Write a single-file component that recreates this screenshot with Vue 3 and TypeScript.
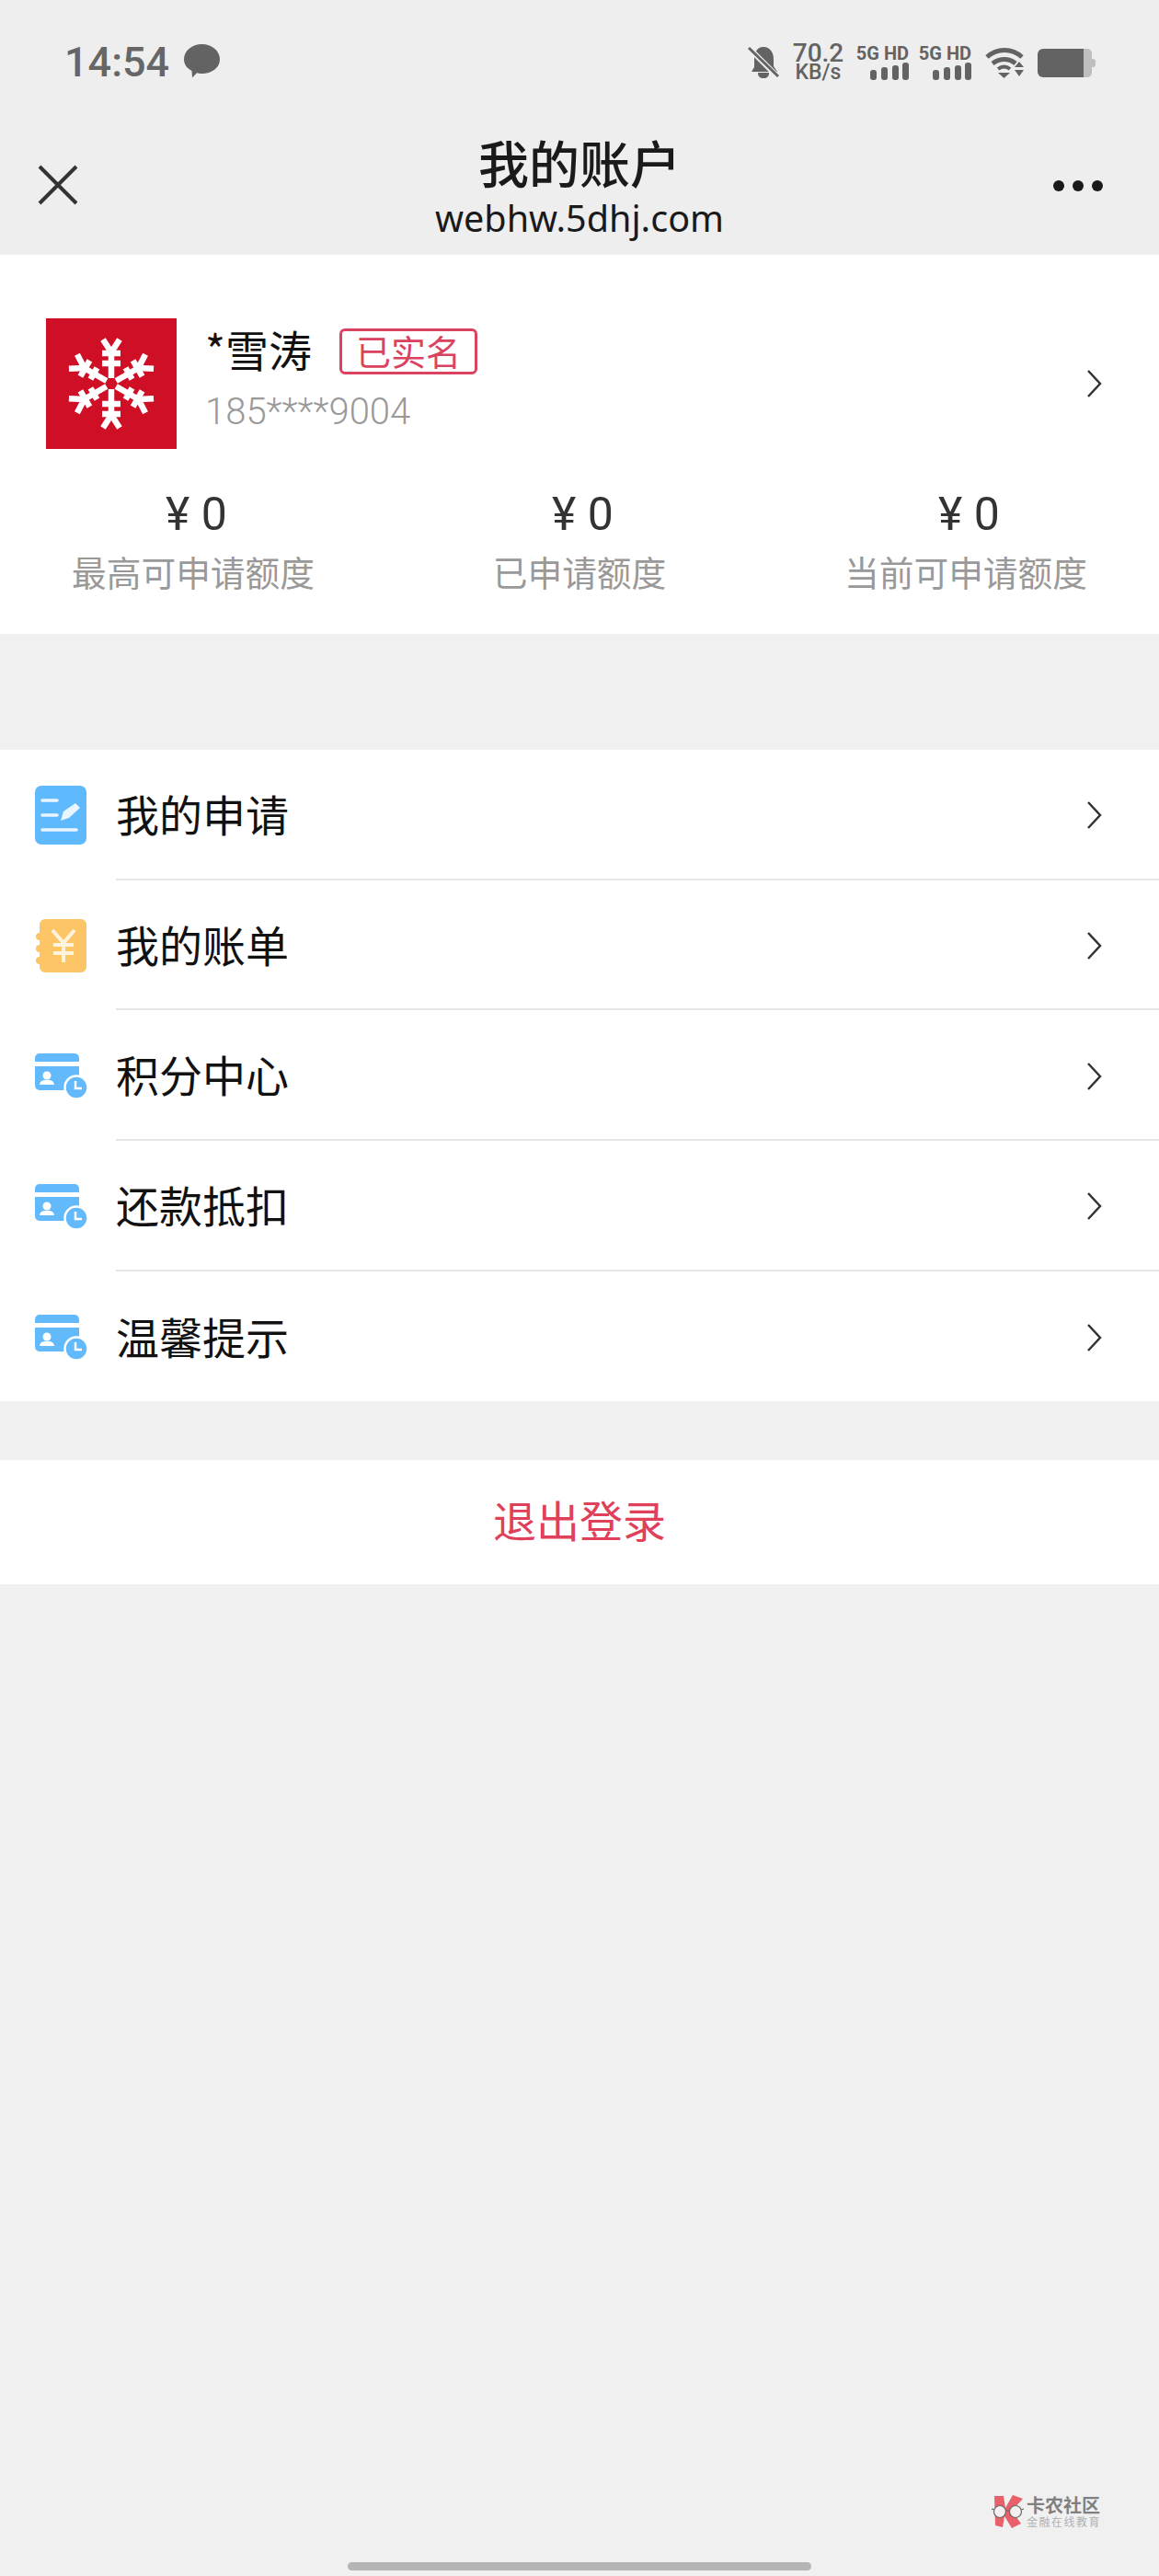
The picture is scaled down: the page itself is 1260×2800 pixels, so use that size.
<script setup lang="ts">
const stats = [
  { value: '0', label: '最高可申请额度' },
  { value: '0', label: '已申请额度' },
  { value: '0', label: '当前可申请额度' },
]
const menu = [
  { label: '我的申请', icon: 'apply' },
  { label: '我的账单', icon: 'bill' },
  { label: '积分中心', icon: 'card' },
  { label: '还款抵扣', icon: 'card' },
  { label: '温馨提示', icon: 'card' },
]
const arms = [0, 60, 120, 180, 240, 300]
const half = (a: number) => (a % 180 === 0 ? 10 : 7)
</script>

<template>
  <div class="page">
    <header class="top">
      <div class="status">
        <div class="status-left">
          <span class="time">14:54</span>
          <svg class="bubble" viewBox="0 0 39 38" width="39" height="38">
            <path d="M19.5 0C30 0 39 7 39 16.500S30 32 19.500 32c-2 0-4-.2-5.500-.7L9 36.500 8.500 29C3 26 0 22 0 16.500 0 7 9 0 19.500 0Z" fill="#636363" />
          </svg>
        </div>
        <div class="status-right">
          <svg class="bell" viewBox="0 0 34 36" width="34" height="36">
            <path d="M17 1c7 0 11 6 11 13v8l4 6H4l3-5V14C7 7 10 1 17 1Z" fill="#636363" />
            <path d="M11 29h12c0 4-2 6-6 6s-6-2-6-6Z" fill="#636363" />
            <path d="M2 3 33 34" stroke="#eeeeee" stroke-width="6" />
            <path d="M1 2 33 33" stroke="#636363" stroke-width="3" />
          </svg>
          <div class="speed">
            <span class="speed-num">70.2</span>
            <span class="speed-unit">KB/s</span>
          </div>
          <div class="sim" v-for="s in 2" :key="s">
            <span class="sim-label">5G HD</span>
            <svg class="sim-bars" viewBox="0 0 42 20" width="42" height="20">
              <rect x="0" y="8" width="7" height="11" rx="3" fill="#636363" />
              <rect x="12" y="5" width="7" height="14" rx="3" fill="#636363" />
              <rect x="24" y="3" width="7" height="16" rx="3" fill="#636363" />
              <rect x="35" y="0" width="7" height="19" rx="3" fill="#636363" />
            </svg>
          </div>
          <svg class="wifi" viewBox="0 0 43 34" width="43" height="34">
            <path d="M2 11C13 1 29 1 40 11" fill="none" stroke="#636363" stroke-width="5" />
            <path d="M8 18c8-6 18-6 25 0" fill="none" stroke="#636363" stroke-width="5" />
            <path d="M14 24c4-3 9-3 13 0" fill="none" stroke="#636363" stroke-width="4" />
            <path d="M14 28h13l-6.500 6Z" fill="#636363" />
            <path d="M32 22h10l-5-6ZM32 25h10l-5 7Z" fill="#636363" />
          </svg>
          <svg class="battery" viewBox="0 0 63 31" width="63" height="31">
            <path d="M6 0H50V31H6a6 6 0 0 1-6-6V6a6 6 0 0 1 6-6Z" fill="#636363" />
            <path d="M50 0h4a5 5 0 0 1 5 5v21a5 5 0 0 1-5 5h-4Z" fill="#bfbfbf" />
            <path d="M59 11h1a3 3 0 0 1 3 3v3a3 3 0 0 1-3 3h-1Z" fill="#bfbfbf" />
          </svg>
        </div>
      </div>
      <div class="nav">
        <svg class="close" viewBox="0 0 44 44" width="44" height="44">
          <path d="M2 2 42 42M42 2 2 42" stroke="#333" stroke-width="4" fill="none" />
        </svg>
        <div class="nav-title">
          <div class="title">我的账户</div>
          <div class="url">webhw.5dhj.com</div>
        </div>
        <div class="dots"><i></i><i></i><i></i></div>
      </div>
    </header>

    <section class="account">
      <div class="profile">
        <div class="avatar">
          <svg viewBox="-71 -71 142 142" width="142" height="142">
            <g v-for="a in arms" :key="a" :transform="`rotate(${a})`" fill="none" stroke="#fff" stroke-width="6.500">
              <path d="M0-6V-36" />
              <path :d="`M${-half(a)}-22H${half(a)}M-10-33H10`" />
              <path d="M0-34-9-48M0-34 9-48" />
            </g>
          </svg>
        </div>
        <div class="info">
          <div class="name-row">
            <span class="name">*雪涛</span>
            <span class="tag">已实名</span>
          </div>
          <div class="phone">185****9004</div>
        </div>
        <svg class="chevron" viewBox="0 0 18 32" width="18" height="32">
          <path d="M3 2 16 16 3 30" fill="none" stroke="#333" stroke-width="2.500" />
        </svg>
      </div>
      <div class="stats">
        <div class="stat" v-for="s in stats" :key="s.label">
          <div class="stat-value">¥ {{ s.value }}</div>
          <div class="stat-label">{{ s.label }}</div>
        </div>
      </div>
    </section>

    <section class="menu">
      <div class="row" v-for="m in menu" :key="m.label">
        <div class="row-icon">
          <svg v-if="m.icon === 'apply'" viewBox="0 0 56 64" width="56" height="64">
            <rect width="56" height="64" rx="7" fill="#5fb9fd" />
            <path d="M8 16H24M8 32H24M8 48H45" stroke="#eaf6ff" stroke-width="3.500" stroke-linecap="round" />
            <path d="M28 38 31 28 44 19 49 24 37 35Z" fill="#eaf6ff" />
          </svg>
          <svg v-else-if="m.icon === 'bill'" viewBox="0 0 56 58" width="56" height="58">
            <path d="M11 0H50a6 6 0 0 1 6 6V52a6 6 0 0 1-6 6H11a6 6 0 0 1-6-6V49a4 4 0 0 1 0-8V36a4 4 0 0 1 0-8V23a4 4 0 0 1 0-8V6a6 6 0 0 1 6-6Z" fill="#fdc566" />
            <path d="M19 12 31 26 43 12M31 26V47M20 28H42M20 37H42" fill="none" stroke="#fff3dc" stroke-width="4" />
          </svg>
          <svg v-else viewBox="0 0 56 48" width="56" height="48">
            <path d="M5 0H43a5 5 0 0 1 5 5V9H0V5a5 5 0 0 1 5-5Z" fill="#62bafc" />
            <path d="M0 14H48V40H5a5 5 0 0 1-5-5Z" fill="#62bafc" />
            <circle cx="13" cy="24" r="4.500" fill="#fff" />
            <path d="M5 34c1-5 4-5 8-5s7 0 8 5Z" fill="#fff" />
            <circle cx="45" cy="37" r="12.500" fill="#62bafc" stroke="#fff" stroke-width="2.500" />
            <path d="M44 30V38H51" fill="none" stroke="#fff" stroke-width="2.500" />
          </svg>
        </div>
        <div class="row-body">
          <span class="row-label">{{ m.label }}</span>
          <svg class="chevron row-chevron" viewBox="0 0 18 32" width="18" height="32">
            <path d="M3 2 16 16 3 30" fill="none" stroke="#333" stroke-width="2.500" />
          </svg>
        </div>
      </div>
    </section>

    <section class="logout">退出登录</section>

    <div class="spacer">
      <div class="mark">
        <svg viewBox="0 0 36 36" width="36" height="36">
          <path d="M3 1H13L15 14 23 0 34 4 22 17 32 31 22 36 14 23 12 35 4 33Z" fill="#e8606a" />
          <circle cx="9" cy="18" r="6.500" fill="#f4f0f0" stroke="#666" stroke-width="1.200" />
          <circle cx="26" cy="18" r="6.500" fill="#f4f0f0" stroke="#666" stroke-width="1.200" />
          <path d="M15 17h5M0 15l3 1M35 15l-3 1" stroke="#666" stroke-width="1.200" />
        </svg>
        <div class="mark-text">
          <span class="mark-main">卡农社区</span>
          <span class="mark-sub">金融在线教育</span>
        </div>
      </div>
      <div class="handle"></div>
    </div>
  </div>
</template>

<style scoped>
.page {
  width: 1260px;
  height: 2800px;
  background: #f0f0f0;
  display: flex;
  flex-direction: column;
  font-family: "Noto Sans", "Noto Sans CJK SC", sans-serif;
  overflow: hidden;
}
.top { background: #eeeeee; height: 277px; }
.status {
  height: 136px;
  padding: 0 69px 0 70px;
  display: flex;
  align-items: center;
  justify-content: space-between;
  box-sizing: border-box;
}
.status-left { display: flex; align-items: center; gap: 16px; }
.time { font-family: Roboto, sans-serif; font-weight: 500; font-size: 45px; line-height: 50px; color: #666; }
.bubble { margin-top: -2px; }
.status-right { display: flex; align-items: center; height: 40px; }
.bell { margin-right: 15px; }
.speed { display: flex; flex-direction: column; align-items: center; width: 55px; margin-right: 13px; font-family: Roboto, sans-serif; color: #636363; }
.speed-num { font-size: 28px; line-height: 22px; font-weight: 500; }
.speed-unit { font-size: 23px; line-height: 20px; font-weight: 500; }
.sim { width: 58px; margin-right: 10px; display: flex; flex-direction: column; align-items: flex-end; }
.sim-label { font-family: Roboto, sans-serif; font-weight: 700; font-size: 20px; line-height: 20px; color: #636363; white-space: nowrap; }
.sim-bars { display: block; }
.wifi { margin: 0 14px 0 5px; }
.nav {
  height: 141px;
  display: grid;
  grid-template-columns: 1fr auto 1fr;
  padding: 7px 41px 0;
  box-sizing: border-box;
}
.close { margin-top: 36px; }
.nav-title { text-align: center; }
.title { font-size: 55px; line-height: 64px; color: #1a1a1a; font-family: "Noto Sans CJK SC", sans-serif; font-weight: 500; }
.url { font-size: 39.500px; line-height: 48px; margin-top: 6px; color: #1a1a1a; }
.dots { justify-self: end; display: flex; gap: 9px; margin: 53px 20px 0 0; }
.dots i { width: 12px; height: 12px; border-radius: 50%; background: #1a1a1a; }

.account { background: #fff; height: 412px; padding-top: 69px; box-sizing: border-box; }
.profile { display: flex; padding: 0 62px 0 50px; height: 142px; align-items: center; }
.avatar { width: 142px; height: 142px; background: #cf0f26; flex: none; }
.avatar svg { display: block; }
.info { flex: 1; margin-left: 31px; padding-top: 11px; align-self: flex-start; }
.name-row { display: flex; align-items: center; height: 50px; }
.name { font-family: "Noto Sans CJK SC", sans-serif; font-size: 47px; line-height: 50px; color: #111; width: 146px; margin-bottom: 6px; }
.tag {
  width: 150px;
  height: 50px;
  box-sizing: border-box;
  border: 3px solid #d9435f;
  border-radius: 6px;
  font-family: "Noto Sans CJK SC", sans-serif;
  color: #d9435f;
  font-size: 38px;
  line-height: 42px;
  text-align: center;
}
.phone { font-size: 40px; line-height: 50px; margin-top: 16px; color: #999; font-family: Roboto, sans-serif; font-weight: 300; }
.stats { display: grid; grid-template-columns: repeat(3, 420px); margin-top: 46px; }
.stat { text-align: center; }
.stat-value { font-size: 50px; line-height: 50px; padding-left: 7px; color: #333; font-family: Roboto, "Noto Sans CJK SC", sans-serif; font-weight: 400; }
.stat-label { font-size: 37.700px; line-height: 48px; margin-top: 13px; color: #999; font-family: "Noto Sans CJK SC", sans-serif; }

.menu { background: #fff; margin-top: 126px; }
.row { display: flex; height: 141.700px; }
.row-icon { width: 126px; padding-left: 38px; box-sizing: border-box; display: flex; align-items: center; flex: none; }
.row-icon svg { display: block; overflow: visible; }
.row-body {
  flex: 1;
  display: flex;
  align-items: center;
  justify-content: space-between;
  padding-right: 62px;
  border-bottom: 2px solid #e6e6e6;
}
.row:last-child .row-body { border-bottom: none; }
.row-label { font-family: "Noto Sans CJK SC", sans-serif; font-size: 47px; color: #111; margin-bottom: 3px; }
.row-chevron { margin-top: 3px; }

.logout {
  background: #fff;
  margin-top: 64px;
  height: 135px;
  line-height: 127px;
  text-align: center;
  font-family: "Noto Sans CJK SC", sans-serif;
  font-size: 47px;
  color: #e0405a;
}
.spacer { flex: 1; display: flex; flex-direction: column; align-items: center; justify-content: flex-end; }
.mark { align-self: flex-end; margin-right: 63px; display: flex; align-items: center; gap: 2px; margin-bottom: 37px; }
.mark-text { display: flex; flex-direction: column; align-items: flex-start; }
.mark-main { font-family: "Noto Sans CJK SC", sans-serif; font-weight: 700; font-size: 20px; line-height: 22px; color: #808080; }
.mark-sub { font-family: "Noto Sans CJK SC", sans-serif; font-size: 12px; line-height: 14px; letter-spacing: 1.500px; color: #b0b0b0; }
.handle { width: 504px; height: 9px; border-radius: 5px; background: #b5b5b5; margin-bottom: 6px; }
</style>
